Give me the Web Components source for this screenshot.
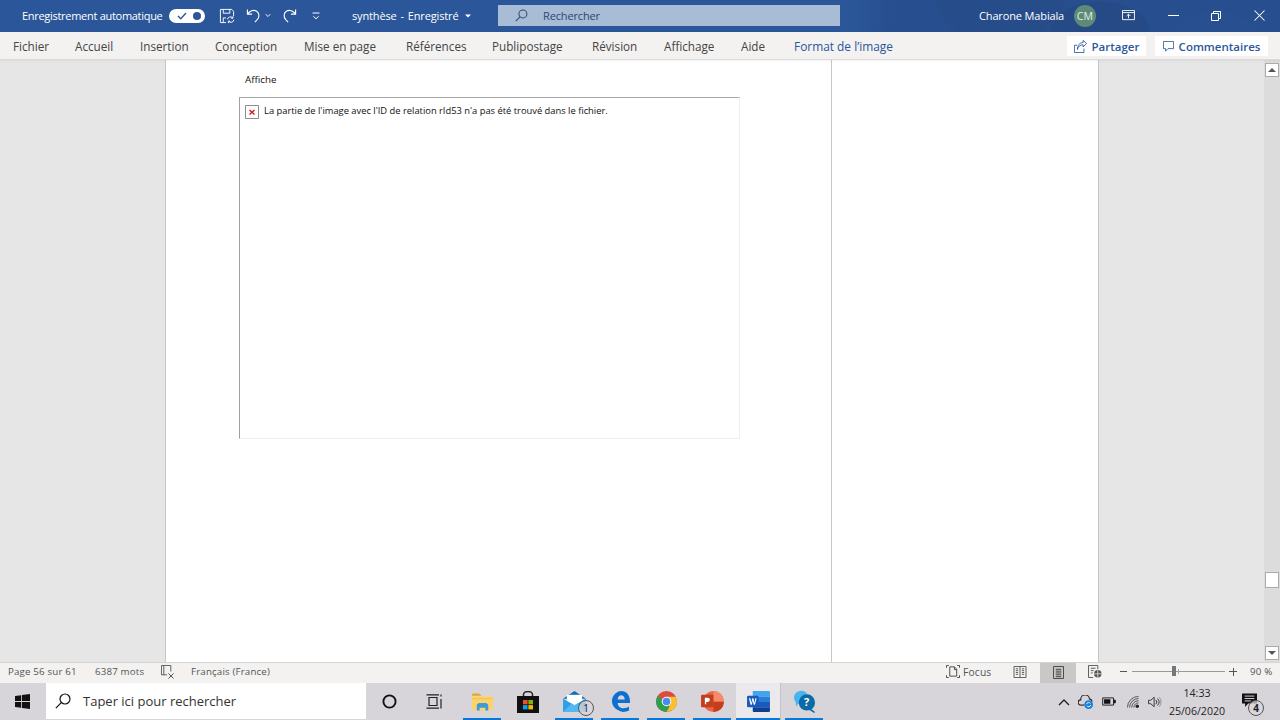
<!DOCTYPE html>
<html lang="fr"><head><meta charset="utf-8"><title>synthèse - Word</title>
<style>
html,body{margin:0;height:100%;overflow:hidden}
body{display:flex;flex-direction:column;width:1280px;height:720px;font-family:"Open Sans","Noto Sans","Liberation Sans",sans-serif}
</style></head><body>
<word-titlebar></word-titlebar>
<word-ribbon></word-ribbon>
<word-document>
  <doc-placeholder message="La partie de l'image avec l'ID de relation rId53 n'a pas été trouvé dans le fichier."></doc-placeholder>
</word-document>
<word-status></word-status>
<win-taskbar></win-taskbar>
<script>
const ICONS={
save:'<svg viewBox="0 0 17 17" fill="none" stroke="#fff" stroke-width="1"><path d="M1.5 1.5h12l2 2v5M1.5 1.5v14h6M4.5 1.5v4h7v-4M4.5 15.5v-5h3"/><path d="M9 12a3.2 3.2 0 0 1 5.6-1.4M15.8 12.5a3.2 3.2 0 0 1-5.6 1.6M14.8 8.8v2h-2M10 16v-2h2" /></svg>',
undo:'<svg viewBox="0 0 16 16" fill="none" stroke="#fff" stroke-width="1.2"><path d="M1.5 1.5v5h5M1.7 6.3C4 3 8 1.5 11 3.2c3.300 1.900 3.600 6.500 1 9.300l-2.500 2.500"/></svg>',
redo:'<svg viewBox="0 0 16 16" fill="none" stroke="#fff" stroke-width="1.2"><path d="M14.500 1.500v5h-5M14.300 6.300C12 3 8 1.500 5 3.200c-3.300 1.900-3.600 6.500-1 9.300l2.500 2.500"/></svg>',
chev:'<svg viewBox="0 0 7 5" fill="none" stroke="#fff" stroke-width="1.100"><path d="M.8 1l2.700 2.700L6.200 1"/></svg>',
custom:'<svg viewBox="0 0 8 8" fill="none" stroke="#fff" stroke-width="1"><path d="M.5 1h7"/><path d="M1.300 4.200L4 6.800l2.700-2.600"/></svg>',
caret:'<svg viewBox="0 0 6 4"><path d="M0 .5h6L3 3.500z" fill="#fff"/></svg>',
mag:'<svg viewBox="0 0 14 14" fill="none" stroke="#2f4a72" stroke-width="1.100"><circle cx="8.500" cy="5.300" r="4.300"/><path d="M5.400 8.400L.8 13"/></svg>',
present:'<svg viewBox="0 0 14 12" fill="none" stroke="#fff"><path d="M.5 .5h13v10H.5zM.5 2.800h13"/><path d="M7 9V4.500M5 6.500l2-2 2 2"/></svg>',
min:'<svg viewBox="0 0 11 1"><path d="M0 .5h11" stroke="#fff"/></svg>',
restore:'<svg viewBox="0 0 10 10" fill="none" stroke="#fff"><path d="M.5 2.500h7v7h-7zM2.500 2.500v-2h7v7h-2"/></svg>',
close:'<svg viewBox="0 0 11 11" fill="none" stroke="#fff" stroke-width="1.050"><path d="M.5 .5l10 10M10.500 .5l-10 10"/></svg>',
share:'<svg viewBox="0 0 15 15" fill="none" stroke="#2b579a"><path d="M3.500 6H.5v8.500h11V10"/><path d="M4 11C4.500 7.500 7 5.500 10.500 5.500V8l4-4-4-3.500V3C6.500 3 4 6 4 11z"/></svg>',
comment:'<svg viewBox="0 0 13 13" fill="none" stroke="#2b579a"><path d="M.5 .5h12v8.500H6L3 12V9H.5z"/></svg>',
broken:'<svg viewBox="0 0 14 14"><path d="M.5 .5h13v13H.5z" fill="#fff" stroke="#8d8d8d"/><path d="M4.500 5l5 4.500M9.500 5l-5 4.500" stroke="#d3121f" stroke-width="1.400"/></svg>',
proof:'<svg viewBox="0 0 15 15" fill="none" stroke="#555"><path d="M10.500 7V.5H.5v10h6M3 .5v10"/><path d="M8 9l5.500 5.500M13.500 9L8 14.500" stroke="#444"/></svg>',
focus:'<svg viewBox="0 0 15 14" fill="none" stroke="#444"><path d="M.5 3V.5H3M12 .5h2.500V3M.5 11v2.500H3M12 13.500h2.500V11"/><path d="M4 2h5l2.500 2.500V12H4zM9 2v3h2.500"/></svg>',
read:'<svg viewBox="0 0 14 13" fill="none" stroke="#555"><path d="M.5 .5h13v12H.5zM7 .5v12M2.500 3H5M2.500 5H5M2.500 7H5M2.500 9H5M9 3h2.500M9 5h2.500M9 7h2.500M9 9h2.500"/></svg>',
print:'<svg viewBox="0 0 12 14" fill="none" stroke="#3d3d3d"><path d="M.5 .5h11v13H.5zM3 3.500h6M3 5.500h6M3 7.500h6M3 9.500h6M3 11.500h6"/></svg>',
web:'<svg viewBox="0 0 15 14" fill="none" stroke="#555"><path d="M.5 .5h10v4M.5 .5v13h5M3 3.500h5M3 6h3M3 8.500h2"/><circle cx="10.500" cy="9.500" r="4" fill="#555" stroke="none"/><path d="M6.500 9.500h8M10.500 5.500v8" stroke="#eee" stroke-width=".8"/></svg>',
win:'<svg viewBox="0 0 15 15" fill="#111"><path d="M0 2.100l6.200-.9v5.900H0zM7 1.100L15 0v7.100H7zM0 7.900h6.200v5.900L0 12.900zM7 7.900h8V15l-8-1.100z"/></svg>',
tmag:'<svg viewBox="0 0 16 16" fill="none" stroke="#111" stroke-width="1.200"><circle cx="10" cy="6" r="5"/><path d="M6.300 9.700L.8 15.200"/></svg>',
cortana:'<svg viewBox="0 0 16 16" fill="none" stroke="#111" stroke-width="2"><circle cx="8" cy="8" r="6.500"/></svg>',
taskview:'<svg viewBox="0 0 16 15" fill="none" stroke="#222" stroke-width="1.200"><path d="M3 3.500h8v8H3zM.5 .8H13M.5 14.200H13M15 .5v2M15 5v9.500"/></svg>',
folder:'<svg viewBox="0 0 22 18"><path d="M0 1.500Q0 0 1.500 0h6L10 2.500H0z" fill="#e2a72e"/><path d="M0 3h22v13.500q0 1.500-1.500 1.500h-19Q0 18 0 16.500z" fill="#fcd36b"/><path d="M0 6h22V5H0z" fill="#f3bd4a"/><path d="M7 10h8l2 2v6h-3v-3H8v3H5v-6z" fill="#3d9bd9"/></svg>',
store:'<svg viewBox="0 0 22 22"><path d="M6.500 6V3.500a4.500 3 0 0 1 9 0V6" fill="none" stroke="#222" stroke-width="1.500"/><path d="M0 5h22v17H0z" fill="#111"/><path d="M6 9h4.600v4.300H6z" fill="#f25022"/><path d="M11.400 9H16v4.300h-4.600z" fill="#7fba00"/><path d="M6 14.100h4.600v4.300H6z" fill="#00a4ef"/><path d="M11.400 14.100H16v4.300h-4.600z" fill="#ffb900"/></svg>',
mail:'<svg viewBox="0 0 24 22"><path d="M0 8L12 0l12 8z" fill="#0b6fbd"/><path d="M4 4h16v12H4z" fill="#fff"/><path d="M0 8v14h24V8L12 15z" fill="#2f9fe8"/><path d="M0 22l9-9 3 2 3-2 9 9z" fill="#55b7f2"/></svg>',
edge:'<svg viewBox="0 0 20 22"><path d="M1 10C1.500 3.500 7 0 11 0c5 0 9 4 9 11v1.500H7c.3 4 3 5.500 6 5.500 2.500 0 4.500-.7 6-1.700v4.200c-1.800 1-4 1.500-6.500 1.500C5.500 20.500 1 16 1 10.500zM7 8.800h7.500C14.300 6 12.500 4.500 10.800 4.500 9 4.500 7.300 6 7 8.800z" fill="#0d6fd0"/></svg>',
chrome:'<svg viewBox="0 0 22 22"><circle cx="11" cy="11" r="11" fill="#dd4b3e"/><path d="M11 11L1.500 5.500A11 11 0 0 0 11 22l5.500-9.500z" fill="#2f9e4f"/><path d="M11 6h9.500a11 11 0 0 1 1.500 5c0 4-2.500 8-5.500 9.500L11 11z" fill="#fbc02d"/><path d="M11 22l5.500-9.500 2 7z" fill="#fbc02d"/><circle cx="11" cy="11" r="5" fill="#fff"/><circle cx="11" cy="11" r="4" fill="#4a8bf0"/></svg>',
ppt:'<svg viewBox="0 0 24 22"><circle cx="13" cy="11" r="11" fill="#e8674a"/><path d="M13 11h11a11 11 0 0 1-11 11z" fill="#c43e1c"/><path d="M13 0a11 11 0 0 1 11 11H13z" fill="#f58b6d"/><rect y="4" width="13" height="13" rx="1" fill="#c43e1c"/><path d="M4 14V7h3a2.200 2.200 0 0 1 0 4.500H5.400V14z" fill="#fff"/></svg>',
word:'<svg viewBox="0 0 24 22"><path d="M6 0h17a1 1 0 0 1 1 1v5H6z" fill="#41a5ee"/><path d="M6 6h18v5.500H6z" fill="#2b7cd3"/><path d="M6 11.500h18V17H6z" fill="#185abd"/><path d="M6 17h18v4a1 1 0 0 1-1 1H7a1 1 0 0 1-1-1z" fill="#103f91"/><rect y="5" width="12" height="12" rx="1" fill="#185abd"/><path d="M2 7.500h1.500l1 5 1-5h1.200l1 5 1-5H10l-1.700 7H7L6 10l-1 4.500H3.700z" fill="#fff"/></svg>',
help:'<svg viewBox="0 0 24 24"><path d="M1 8a7.500 7.500 0 0 1 14-3.500C10 5 7 9 8 14H6l-3 3v-4A7.500 7.500 0 0 1 1 8z" fill="#49b5ee"/><circle cx="14.500" cy="13" r="8.500" fill="#0c6aa6"/><path d="M18 19l5 4-1 1-6-4z" fill="#0c6aa6"/></svg>',
up:'<svg viewBox="0 0 12 8" fill="none" stroke="#222" stroke-width="1.400"><path d="M1 7l5-5 5 5"/></svg>',
cloud:'<svg viewBox="0 0 18 16"><path d="M3 11.500a3 3 0 0 1 0-6A5 5 0 0 1 13 4.500a3.500 3.500 0 0 1 3 3" fill="none" stroke="#222" stroke-width="1.300"/><path d="M3 11.500h4" stroke="#222" stroke-width="1.300"/><circle cx="12" cy="11" r="5" fill="#1a7fd6"/><path d="M9.500 10.500a2.600 2.600 0 0 1 4.600-.8M14.500 11.500a2.600 2.600 0 0 1-4.600.8" stroke="#fff" fill="none"/></svg>',
battery:'<svg viewBox="0 0 15 10" fill="none" stroke="#111"><path d="M.5 1h12v8H.5z"/><path d="M13 3.500h1.500v3H13" fill="#111"/><path d="M2 2.500h7v5H2z" fill="#111" stroke="none"/></svg>',
wifi:'<svg viewBox="0 0 14 14" fill="none" stroke="#333"><path d="M.5 13.500A13 13 0 0 1 13.500 .5M3 13.500A10.500 10.500 0 0 1 13.500 3M5.500 13.500a8 8 0 0 1 8-8M8 13.500a5.500 5.500 0 0 1 5.500-5.500" stroke-width=".9"/><circle cx="12" cy="12" r="2" fill="#222" stroke="none"/></svg>',
volume:'<svg viewBox="0 0 16 14" fill="none" stroke="#222"><path d="M.5 5h2.500l4-3.500v11L3 9H.5z"/><path d="M9 4.500a3.500 3.500 0 0 1 0 5M11 3a6 6 0 0 1 0 8" /><path d="M13 1.500a8.500 8.500 0 0 1 0 11" stroke="#888"/></svg>',
notif:'<svg viewBox="0 0 17 16"><path d="M0 0h17v11.500H7l-3.500 4v-4H0z" fill="#111"/><path d="M3 3h11M3 5.800h11M3 8.500h7" stroke="#eee"/></svg>'
};
class XIcon extends HTMLElement{
  connectedCallback(){
    const w=this.getAttribute('w')||16,h=this.getAttribute('h')||w;
    this.attachShadow({mode:'open'}).innerHTML=`<style>:host{display:block;flex:none;width:${w}px;height:${h}px;line-height:0}svg{width:100%;height:100%;display:block}</style>${ICONS[this.getAttribute('name')]}`;
  }
}
customElements.define('x-icon',XIcon);

class WordTitlebar extends HTMLElement{
  constructor(){super();this.attachShadow({mode:'open'}).innerHTML=`<style>
  :host{display:flex;flex:none;align-items:center;height:32px;box-sizing:border-box;padding-bottom:1px;background:#2b579a;color:#fff;font-size:11px;letter-spacing:-.14px;position:relative;overflow:hidden}
  :host::before{content:"";position:absolute;inset:0;background:radial-gradient(ellipse 90px 60px at 1000px 0,#264c8a 70%,transparent 72%),radial-gradient(ellipse 70px 40px at 1100px 30px,#254a86 70%,transparent 72%),radial-gradient(ellipse 60px 40px at 1215px 40px,#284f90 70%,transparent 72%),linear-gradient(90deg,transparent 840px,#274e8e 900px)}
  :host>*{position:relative}
  .auto{margin-left:22px;width:147px;flex:none;white-space:nowrap;letter-spacing:-.29px}
  .toggle{flex:none;width:36px;height:14px;border-radius:7px;background:#fff;display:flex;align-items:center;justify-content:space-between;padding:0 4px;box-sizing:border-box}
  .toggle i{width:8px;height:8px;border-radius:50%;background:#2b579a}
  .toggle svg{width:10px;height:8px;margin-left:4px}
  .title{margin-left:32px;width:113px;flex:none;white-space:pre;word-spacing:-.8px}
  .search{margin-left:27px;width:342px;height:21px;flex:none;background:#a8bcd6;color:#2c4670;display:flex;align-items:center;box-sizing:border-box;padding-left:17px}
  .search span{margin-left:15px}
  .name{margin-left:139px;width:95px;flex:none;white-space:nowrap}
  .avatar{width:22px;height:22px;border-radius:50%;background:#5e8b78;color:#e4eee8;font-size:10.5px;display:flex;align-items:center;justify-content:center;flex:none;letter-spacing:.2px}
  </style>
  <span class="auto">Enregistrement automatique</span>
  <span class="toggle"><svg viewBox="0 0 10 8" fill="none" stroke="#2b579a" stroke-width="1.400"><path d="M1 4l2.800 2.800L9 1"/></svg><i></i></span>
  <x-icon name="save" w="16" style="margin-left:14px"></x-icon>
  <x-icon name="undo" w="15" style="margin-left:11px"></x-icon>
  <x-icon name="chev" w="6" h="5" style="margin-left:4px"></x-icon>
  <x-icon name="redo" w="15" style="margin-left:11px"></x-icon>
  <x-icon name="custom" w="8" style="margin-left:15px"></x-icon>
  <span class="title">synthèse  -  Enregistré</span>
  <x-icon name="caret" w="6" h="4"></x-icon>
  <div class="search"><x-icon name="mag" w="13"></x-icon><span>Rechercher</span></div>
  <span class="name">Charone Mabiala</span>
  <span class="avatar">CM</span>
  <x-icon name="present" w="13" h="11" style="margin-left:26px"></x-icon>
  <x-icon name="min" w="11" h="1" style="margin-left:33px"></x-icon>
  <x-icon name="restore" w="10" style="margin-left:32px"></x-icon>
  <x-icon name="close" w="11" style="margin-left:33px"></x-icon>`;}
}
customElements.define('word-titlebar',WordTitlebar);

class WordRibbon extends HTMLElement{
  constructor(){super();
  const tabs=[['Fichier',62],['Accueil',65],['Insertion',75],['Conception',89],['Mise en page',102],['Références',86],['Publipostage',100],['Révision',72],['Affichage',77],['Aide',53]];
  this.attachShadow({mode:'open'}).innerHTML=`<style>
  :host{display:flex;flex:none;align-items:center;height:28px;background:#f3f2f1;color:#444;font-size:11.7px;border-bottom:1px solid #dcdbda;box-sizing:border-box;padding:1px 0 0 13px;box-shadow:0 1px 2px rgba(0,0,0,.06);position:relative}
  span{flex:none;white-space:nowrap}
  .fmt{color:#2b579a;width:273px;font-size:11.9px}
  button{all:unset;box-sizing:border-box;display:flex;align-items:center;justify-content:center;gap:5px;background:#fff;color:#2b579a;height:20px;font-weight:600;font-size:11.5px;border-radius:1px;flex:none}
  </style>
  ${tabs.map(t=>`<span style="width:${t[1]}px">${t[0]}</span>`).join('')}
  <span class="fmt">Format de l’image</span>
  <button style="width:79px"><x-icon name="share" w="13"></x-icon>Partager</button>
  <button style="width:113px;margin-left:9px"><x-icon name="comment" w="11"></x-icon>Commentaires</button>`;}
}
customElements.define('word-ribbon',WordRibbon);

class DocPlaceholder extends HTMLElement{
  constructor(){super();this.attachShadow({mode:'open'}).innerHTML=`<style>
  :host{display:block;width:501px;height:342px;box-sizing:border-box;border:1px solid #efefef;border-top:1px solid #a8a8a8;border-left:1px solid #a0a0a0;color:#111;font-size:9.350px;line-height:13px}
  .row{display:flex;align-items:center;gap:5px;padding:6px 0 0 5px}
  .row span{margin-bottom:2px}
  </style><div class="row"><x-icon name="broken" w="14"></x-icon><span id="m"></span></div>`;}
  connectedCallback(){this.shadowRoot.getElementById('m').textContent=this.getAttribute('message');}
}
customElements.define('doc-placeholder',DocPlaceholder);

class WordDocument extends HTMLElement{
  constructor(){super();this.attachShadow({mode:'open'}).innerHTML=`<style>
  :host{display:flex;flex:1;min-height:0;background:#e6e6e6}
  .gutter{width:165px;flex:none}
  .page{width:934px;flex:none;background:#fff;display:flex;border-left:1px solid #c6c6c6;box-sizing:border-box;border-right:1px solid #c6c6c6}
  .main{width:666px;flex:none;box-sizing:border-box;border-right:1px solid #c6c6c6;padding-left:73px}
  .aff{font-size:9.800px;color:#111;padding:13px 0 0 6px;height:37px;box-sizing:border-box}
  .spacer{flex:1}
  .bar{width:16px;flex:none;background:#dcdcdc;display:flex;flex-direction:column;align-items:center;padding-top:3px;box-sizing:border-box}
  .btn{width:14px;height:14px;background:#fff;border:1px solid #aaa;box-sizing:border-box;display:flex;align-items:center;justify-content:center;flex:none}
  .btn i{border-left:4px solid transparent;border-right:4px solid transparent}
  .thumb{width:14px;height:16px;background:#fff;border:1px solid #aaa;box-sizing:border-box;margin-top:495px}
  </style>
  <div class="gutter"></div>
  <div class="page"><div class="main"><div class="aff">Affiche</div><slot></slot></div></div>
  <div class="spacer"></div>
  <div class="bar">
    <div class="btn"><i style="border-bottom:4px solid #555"></i></div>
    <div class="thumb"></div>
    <div class="btn" style="margin-top:58px"><i style="border-top:4px solid #555"></i></div>
  </div>`;}
}
customElements.define('word-document',WordDocument);

class WordStatus extends HTMLElement{
  constructor(){super();this.attachShadow({mode:'open'}).innerHTML=`<style>
  :host{display:flex;flex:none;align-items:center;height:21px;background:#f3f2f1;color:#555;font-size:9.750px;padding:0 0 3px 8px;border-top:1px solid #d6d5d4;box-sizing:border-box;letter-spacing:.15px}
  span{flex:none;white-space:nowrap}
  .sel{width:36px;height:20px;background:#c9c8c7;display:flex;align-items:center;justify-content:center;flex:none;margin:0 0 -3px 13px;align-self:flex-end;padding-bottom:2px;box-sizing:border-box}
  .track{width:93px;height:1px;background:#999;margin-left:5px;flex:none;position:relative}
  .track b{position:absolute;left:40px;top:-5px;width:4px;height:10px;background:#777}
  .track u{position:absolute;left:46px;top:-2px;width:1px;height:5px;background:#aaa}
  .dash{flex:none;width:7px;height:1px;background:#555}
  .plus{flex:none;width:8px;height:8px;background:linear-gradient(#555,#555) center/8px 1px no-repeat,linear-gradient(#555,#555) center/1px 8px no-repeat}
  </style>
  <span style="width:87px">Page 56 sur 61</span>
  <span style="width:66px">6387 mots</span>
  <x-icon name="proof" w="14"></x-icon>
  <span style="margin-left:16px;width:755px">Français (France)</span>
  <x-icon name="focus" w="14" h="13"></x-icon>
  <span style="margin-left:3px;width:50px;font-size:10.300px">Focus</span>
  <x-icon name="read" w="14" h="12"></x-icon>
  <div class="sel"><x-icon name="print" w="11" h="13"></x-icon></div>
  <x-icon name="web" w="14" h="13" style="margin-left:12px"></x-icon>
  <div class="dash" style="margin-left:18px"></div>
  <div class="track"><b></b><u></u></div>
  <div class="plus" style="margin-left:4px"></div>
  <span style="margin-left:13px">90 %</span>`;}
}
customElements.define('word-status',WordStatus);

class TaskItem extends HTMLElement{
  constructor(){super();this.attachShadow({mode:'open'}).innerHTML=`<style>
  :host{display:flex;flex:none;align-items:center;justify-content:center;width:38px;height:37px;box-sizing:border-box;position:relative}
  :host([on])::after{content:"";position:absolute;left:0;right:0;bottom:0;height:2px;background:#0a78d4}
  :host([active]){background:#ebe9eb;width:44px}
  </style><slot></slot>`;}
}
customElements.define('task-item',TaskItem);

class WinTaskbar extends HTMLElement{
  constructor(){super();this.attachShadow({mode:'open'}).innerHTML=`<style>
  :host{display:flex;flex:none;align-items:center;height:37px;background:#d8d5da;color:#111;font-size:12px}
  .search{margin-left:16px;width:320px;height:36px;background:#fff;display:flex;align-items:center;box-sizing:border-box;padding-left:9px;font-size:13px;color:#333;flex:none;align-self:flex-start}
  .search span{margin-left:12px;white-space:nowrap}
  .badge{position:absolute;width:16px;height:16px;border:1px solid #555;border-radius:50%;font-size:10px;display:flex;align-items:center;justify-content:center;box-sizing:border-box;color:#222;background:rgba(216,213,218,.75)}
  .clock{flex:none;width:66px;margin-left:1px;text-align:center;font-size:10.600px;line-height:18px;color:#222}
  .sep{width:1px;height:37px;background:#c4c2c6;flex:none}
  </style>
  <x-icon name="win" w="15" style="margin-left:15px"></x-icon>
  <div class="search"><x-icon name="tmag" w="16"></x-icon><span>Taper ici pour rechercher</span></div>
  <x-icon name="cortana" w="15" style="margin-left:16px"></x-icon>
  <x-icon name="taskview" w="16" h="15" style="margin-left:29px"></x-icon>
  <task-item on style="margin-left:21px"><x-icon name="folder" w="21" h="18"></x-icon></task-item>
  <task-item style="margin-left:8px"><x-icon name="store" w="22"></x-icon></task-item>
  <task-item on style="margin-left:8px"><x-icon name="mail" w="23" h="21"></x-icon><span class="badge" style="left:23px;top:17px">1</span></task-item>
  <task-item on style="margin-left:8px"><x-icon name="edge" w="19" h="21"></x-icon></task-item>
  <task-item on style="margin-left:8px"><x-icon name="chrome" w="21"></x-icon></task-item>
  <task-item on style="margin-left:8px"><x-icon name="ppt" w="23" h="21"></x-icon></task-item>
  <task-item on active style="margin-left:5px"><x-icon name="word" w="23" h="21"></x-icon></task-item>
  <div class="sep"></div>
  <task-item on style="margin-left:4px"><x-icon name="help" w="23"></x-icon><span style="position:absolute;left:19px;top:11px;color:#fff;font-weight:700;font-size:11px">?</span></task-item>
  <x-icon name="up" w="12" h="8" style="margin-left:235px"></x-icon>
  <x-icon name="cloud" w="16" h="14" style="margin-left:8px"></x-icon>
  <x-icon name="battery" w="14" h="9" style="margin-left:8px"></x-icon>
  <x-icon name="wifi" w="12" style="margin-left:11px"></x-icon>
  <x-icon name="volume" w="16" h="12" style="margin-left:8px"></x-icon>
  <div class="clock">14:33<br>25/06/2020</div>
  <div style="position:relative;margin-left:12px;width:15px;height:15px;flex:none;margin-top:-2px"><x-icon name="notif" w="15" h="15"></x-icon><span class="badge" style="left:6px;top:7px;font-weight:700">4</span></div>`;}
}
customElements.define('win-taskbar',WinTaskbar);
</script>
</body></html>
